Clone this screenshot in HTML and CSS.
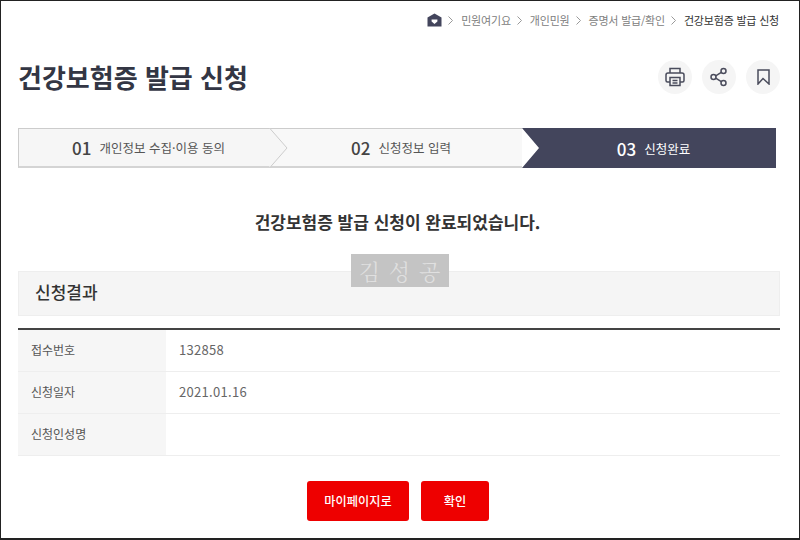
FILE: index.html

```html
<!DOCTYPE html>
<html lang="ko">

<head>
    <meta charset="UTF-8">
    <meta name="viewport" content="width=device-width, initial-scale=1.0">
    <title>건강보험증 발급 신청</title>
    <link rel="stylesheet" href="styles.css">
</head>

<body>
    <div class="page">
        <nav class="breadcrumb">
            <svg class="home" width="15" height="14" viewBox="0 0 15 14">
                <path d="M7.5 0.5 L14.5 4.5 V13.5 H0.5 V4.5 Z" fill="#43455c" />
                <path d="M4.6 6.6 H10.4 V8.6 L7.5 11 L4.6 8.6 Z" fill="#fff" />
            </svg>
            <svg class="sep" width="5" height="9" viewBox="0 0 5 9"><path d="M0.5 0.5 L4.5 4.5 L0.5 8.5" /></svg>
            <a>민원여기요</a>
            <svg class="sep" width="5" height="9" viewBox="0 0 5 9"><path d="M0.5 0.5 L4.5 4.5 L0.5 8.5" /></svg>
            <a>개인민원</a>
            <svg class="sep" width="5" height="9" viewBox="0 0 5 9"><path d="M0.5 0.5 L4.5 4.5 L0.5 8.5" /></svg>
            <a>증명서 발급/확인</a>
            <svg class="sep" width="5" height="9" viewBox="0 0 5 9"><path d="M0.5 0.5 L4.5 4.5 L0.5 8.5" /></svg>
            <strong>건강보험증 발급 신청</strong>
        </nav>

        <header class="title-row">
            <h1>건강보험증 발급 신청</h1>
            <div class="tools">
                <button class="tool" type="button" aria-label="인쇄">
                    <svg width="20" height="20" viewBox="0 0 20 20">
                        <path d="M5 6 V1.5 H15 V6" />
                        <path d="M5 15 H2.5 Q1 15 1 13.5 V8 Q1 6 3 6 H17 Q19 6 19 8 V13.5 Q19 15 17.500 15 H15" />
                        <path d="M5 10.500 H15 V18.500 H5 Z" />
                        <path d="M7.500 13.500 H12.500 M7.500 16 H12.500" />
                    </svg>
                </button>
                <button class="tool" type="button" aria-label="공유">
                    <svg width="18" height="20" viewBox="0 0 18 20">
                        <circle cx="13.500" cy="4" r="2.500" />
                        <circle cx="3.500" cy="10" r="2.500" />
                        <circle cx="13.500" cy="16" r="2.500" />
                        <path d="M5.700 8.800 L11.300 5.300 M5.700 11.200 L11.300 14.700" />
                    </svg>
                </button>
                <button class="tool" type="button" aria-label="즐겨찾기">
                    <svg width="13" height="16" viewBox="0 0 13 16">
                        <path d="M1 1 H12 V15 L6 9.500 L1 15 Z" />
                    </svg>
                </button>
            </div>
        </header>

        <ol class="steps">
            <li class="step step-first">
                <b>01</b><span>개인정보 수집·이용 동의</span>
                <svg class="chevron" width="19" height="40" viewBox="0 0 19 40"><path d="M0.500 0 L18 20 L0.500 40" /></svg>
            </li>
            <li class="step step-second">
                <b>02</b><span>신청정보 입력</span>
            </li>
            <li class="step step-current">
                <b>03</b><span>신청완료</span>
            </li>
        </ol>

        <p class="done">건강보험증 발급 신청이 완료되었습니다.</p>

        <h2 class="section-title">신청결과</h2>

        <table class="result">
            <tbody>
                <tr>
                    <th>접수번호</th>
                    <td>132858</td>
                </tr>
                <tr>
                    <th>신청일자</th>
                    <td>2021.01.16</td>
                </tr>
                <tr>
                    <th>신청인성명</th>
                    <td></td>
                </tr>
            </tbody>
        </table>

        <div class="actions">
            <button class="btn btn-wide" type="button">마이페이지로</button>
            <button class="btn btn-narrow" type="button">확인</button>
        </div>

        <div class="watermark">김 성 공</div>
    </div>
</body>

</html>
```

FILE: styles.css

```css
/* Reset styles */
* {
    margin: 0;
    padding: 0;
    box-sizing: border-box;
}

body {
    font-family: "Noto Sans CJK KR", "Noto Sans", sans-serif;
    background-color: #fff;
    color: #333;
    overflow: hidden;
}

.page {
    position: relative;
    width: 800px;
    height: 540px;
    padding: 0 19px 0 17px;
    border: 1px solid #222;
    border-width: 1px 1px 2px 1px;
    overflow: hidden;
}

/* Breadcrumb */
.breadcrumb {
    display: flex;
    justify-content: flex-end;
    align-items: center;
    height: 38px;
    padding-right: 1px;
    font-size: 11px;
    color: #808080;
    letter-spacing: -0.200px;
}

.breadcrumb strong {
    font-weight: 400;
    color: #333;
}

.sep {
    margin: 0 8px 0 6px;
    fill: none;
    stroke: #999;
}

/* Title */
.title-row {
    display: flex;
    justify-content: space-between;
    align-items: center;
    height: 38px;
    margin-top: 19px;
}

h1 {
    font-size: 26px;
    font-weight: 700;
    line-height: 40px;
    color: #333644;
}

.tools {
    display: flex;
    gap: 10px;
}

.tool {
    display: flex;
    align-items: center;
    justify-content: center;
    width: 34px;
    height: 34px;
    border: none;
    border-radius: 50%;
    background-color: #f5f5f5;
}

.tool svg {
    fill: none;
    stroke: #4a4c5c;
    stroke-width: 1.500;
}

/* Steps */
.steps {
    display: flex;
    width: 758px;
    height: 40px;
    margin-top: 32px;
    list-style: none;
}

.step {
    position: relative;
    display: flex;
    align-items: center;
    justify-content: center;
    gap: 8px;
    height: 40px;
    font-size: 12.500px;
    color: #555;
    background-color: #f6f6f6;
    border-top: 1px solid #ccc;
    border-bottom: 2px solid #d4d4d4;
}

.step b {
    font-size: 17px;
    font-weight: 500;
    color: #444;
}

.step-first {
    width: 252px;
    padding-left: 8px;
    border-left: 1px solid #ccc;
}

.step-second {
    width: 252px;
    padding-left: 10px;
    background-color: #f8f8f8;
}

.step-current {
    width: 254px;
    padding-left: 9px;
    color: #fff;
    background-color: #43455c;
    border: none;
    clip-path: polygon(0 0, 100% 0, 100% 100%, 0 100%, 17px 50%);
}

.step-current b {
    color: #fff;
}

.chevron {
    position: absolute;
    top: -1px;
    left: 100%;
    margin-left: -1px;
    z-index: 1;
    fill: #f6f6f6;
    stroke: #ccc;
}

/* Result */
.done {
    margin-top: 42px;
    font-size: 17px;
    font-weight: 700;
    line-height: 24px;
    text-align: center;
    color: #333;
    padding-right: 3px;
}

.section-title {
    height: 45px;
    margin-top: 37px;
    padding-left: 16px;
    font-size: 17px;
    font-weight: 500;
    line-height: 40px;
    color: #333;
    background-color: #f5f5f5;
    border: 1px solid #eee;
}

.result {
    width: 100%;
    margin-top: 12px;
    border-collapse: collapse;
    border-top: 2px solid #444;
    border-bottom: 1px solid #ccc;
    font-size: 12px;
    color: #555;
    table-layout: fixed;
}

.result th,
.result td {
    height: 42px;
    padding-bottom: 2px;
    text-align: left;
    font-weight: 400;
    border-bottom: 1px solid #eee;
}

.result th {
    width: 148px;
    padding-left: 13px;
    background-color: #f6f6f6;
}

.result td {
    padding-left: 13px;
    font-size: 13px;
    letter-spacing: 0.300px;
    color: #666;
}

/* Buttons */
.actions {
    display: flex;
    justify-content: center;
    gap: 12px;
    margin-top: 25px;
    padding-right: 2px;
}

.btn {
    height: 40px;
    border: none;
    border-radius: 3px;
    font-family: inherit;
    font-size: 12.200px;
    font-weight: 500;
    color: #fff;
    background-color: #ee0000;
}

.btn-wide {
    width: 102px;
}

.btn-narrow {
    width: 68px;
}

/* Name stamp over the page */
.watermark {
    position: absolute;
    top: 253px;
    left: 350px;
    width: 98px;
    height: 33px;
    font-family: "Noto Serif CJK KR", "Liberation Serif", "Noto Sans CJK KR", serif;
    font-size: 22px;
    font-weight: 300;
    letter-spacing: 1px;
    line-height: 33px;
    text-align: center;
    color: #e0e0e0;
    background-color: #c4c4c4;
}
```
